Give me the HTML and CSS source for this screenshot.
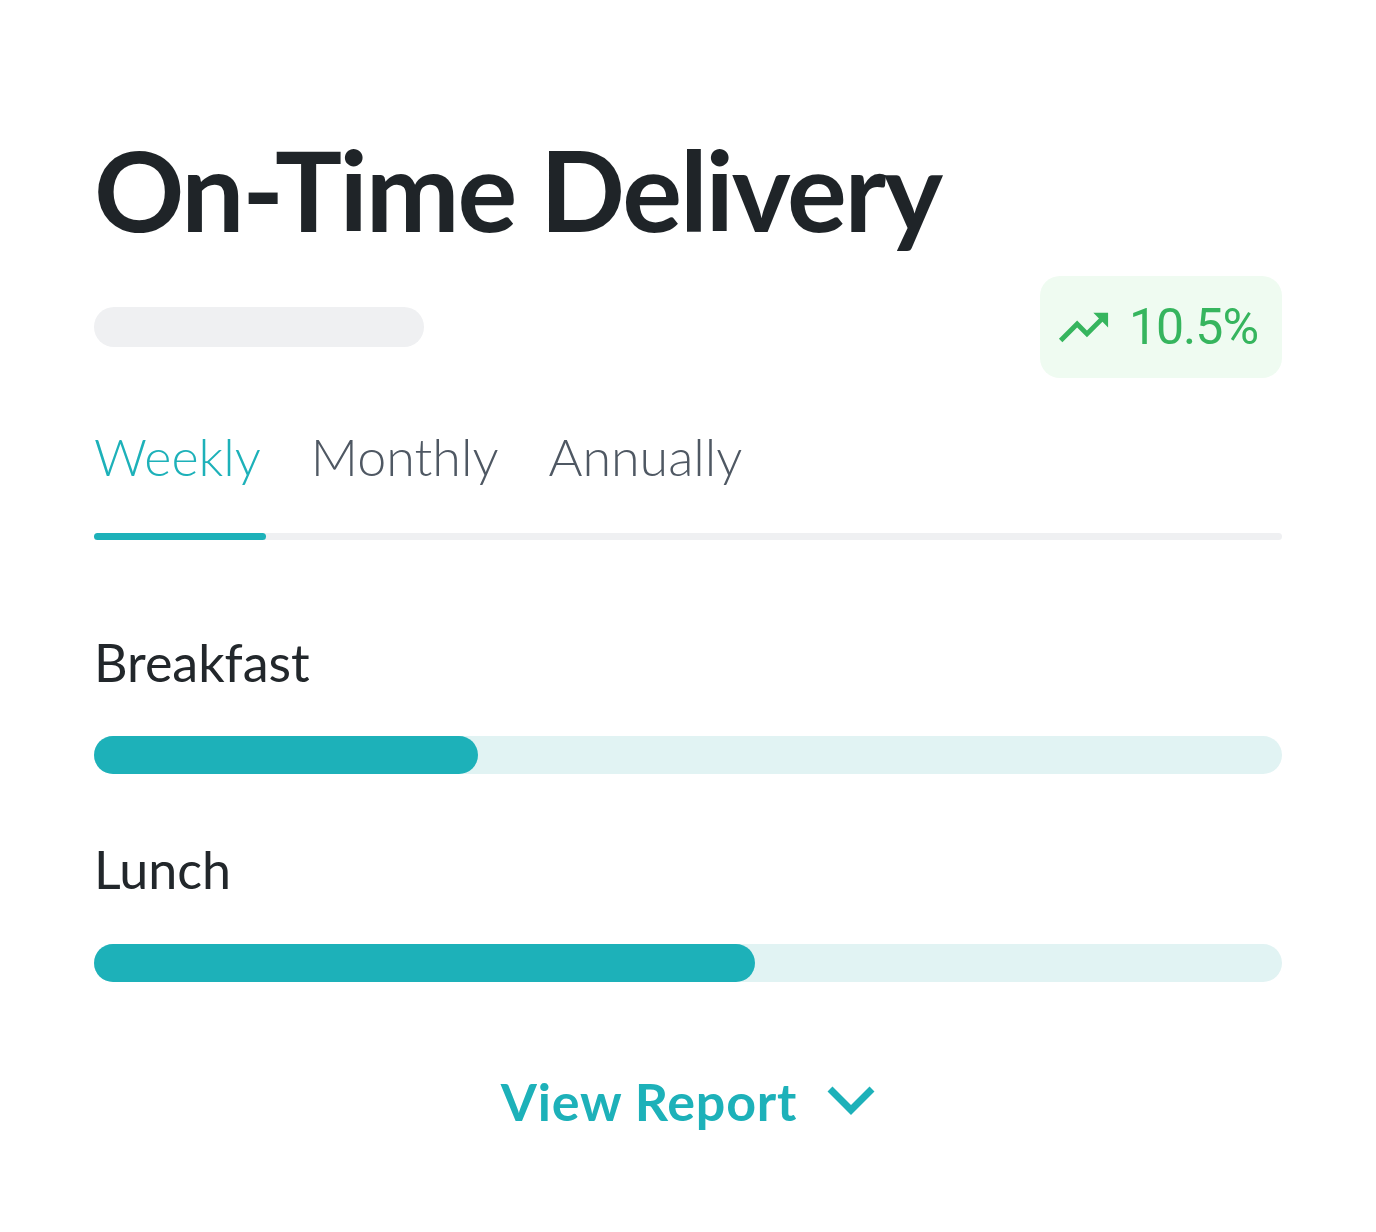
FILE: index.html
```html
<!DOCTYPE html>
<html lang="en">
<head>
    <meta charset="UTF-8">
    <meta name="viewport" content="width=device-width, initial-scale=1.0">
    <title>On-Time Delivery</title>
    <link rel="stylesheet" href="styles.css">
</head>
<body>
    <div class="card">
        <h1 class="title">On-Time Delivery</h1>

        <div class="summary-row">
            <div class="skeleton"></div>
            <div class="trend-badge">
                <svg class="trend-icon" viewBox="0 0 24 24" width="59" height="59">
                    <path d="M16 6l2.29 2.29-4.88 4.88-4-4L2 16.59 3.41 18l6-6 4 4 6.3-6.29L22 12V6z" fill="currentColor"/>
                </svg>
                <span class="trend-value">10.5%</span>
            </div>
        </div>

        <div class="tabs">
            <span class="tab active">Weekly</span>
            <span class="tab">Monthly</span>
            <span class="tab">Annually</span>
        </div>
        <div class="tab-track">
            <div class="tab-indicator"></div>
        </div>

        <div class="meal">
            <div class="meal-label">Breakfast</div>
            <div class="bar">
                <div class="bar-fill" style="width: 32.3%;"></div>
            </div>
        </div>

        <div class="meal">
            <div class="meal-label">Lunch</div>
            <div class="bar">
                <div class="bar-fill" style="width: 55.6%;"></div>
            </div>
        </div>

        <div class="report-link">
            <span>View Report</span>
            <svg class="chevron" viewBox="0 0 48 30" width="48" height="30">
                <path d="M3 3 L24 24 L45 3" fill="none" stroke="currentColor" stroke-width="7"/>
            </svg>
        </div>
    </div>
</body>
</html>
```

FILE: styles.css
```css
body {
    margin: 0;
    padding: 0;
    background-color: #ffffff;
    font-family: Lato, "Open Sans", sans-serif;
}

.card {
    padding: 122px 94px 60px 94px;
}

/* Heading */
.title {
    margin: 0;
    font-size: 112px;
    font-weight: 700;
    line-height: 1.2;
    letter-spacing: -2.2px;
    color: #1f2428;
}

/* Skeleton + trend badge */
.summary-row {
    display: flex;
    justify-content: space-between;
    align-items: center;
    margin-top: 20px;
}

.skeleton {
    width: 330px;
    height: 40px;
    border-radius: 20px;
    background-color: #eff0f2;
}

.trend-badge {
    display: flex;
    align-items: center;
    gap: 16px;
    height: 102px;
    padding: 0 24px 0 14px;
    border-radius: 20px;
    background-color: #effbf1;
    color: #36b55e;
}

.trend-value {
    font-family: Roboto, sans-serif;
    font-size: 50px;
    letter-spacing: -1px;
}

/* Tabs */
.tabs {
    display: flex;
    gap: 50px;
    margin-top: 47px;
    padding-bottom: 45px;
}

.tab {
    font-size: 52px;
    font-weight: 300;
    line-height: 1.2;
    color: #4f5863;
}

.tab.active {
    color: #1db1b9;
}

.tab-track {
    height: 7px;
    border-radius: 4px;
    background-color: #eff0f2;
}

.tab-indicator {
    width: 172px;
    height: 7px;
    border-radius: 4px;
    background-color: #1db1b9;
}

/* Progress bars */
.meal {
    margin-top: 91px;
}

.meal + .meal {
    margin-top: 64px;
}

.meal-label {
    font-size: 52px;
    font-weight: 400;
    line-height: 1.2;
    color: #22272b;
}

.bar {
    height: 38px;
    margin-top: 43px;
    border-radius: 19px;
    background-color: #e1f3f3;
}

.bar-fill {
    height: 38px;
    border-radius: 19px;
    background-color: #1db1b9;
}

/* Footer link */
.report-link {
    display: flex;
    justify-content: center;
    align-items: center;
    gap: 30px;
    margin-top: 88px;
    font-size: 52px;
    font-weight: 700;
    line-height: 1.2;
    letter-spacing: 0.8px;
    color: #1db1b9;
}
```
